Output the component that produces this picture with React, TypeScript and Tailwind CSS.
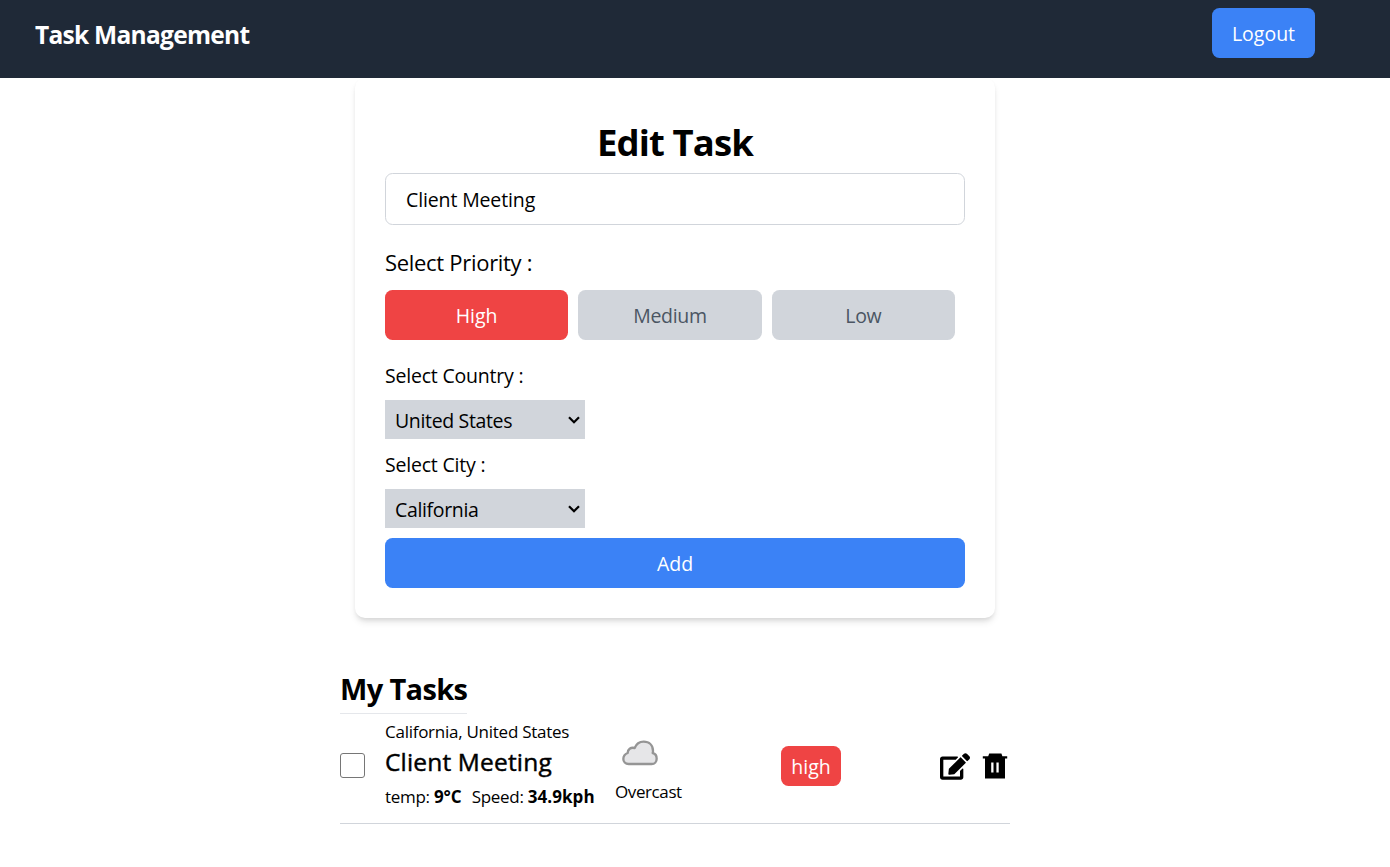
import { useState } from "react";
import { FaEdit } from "react-icons/fa";

const priorities = ["High", "Medium", "Low"];

function Chevron() {
  return (
    <svg className="h-[8px] w-[12px]" viewBox="0 0 12 8" fill="none" stroke="#000" strokeWidth="2.2">
      <path d="M1 1.2 6 6.2 11 1.2" />
    </svg>
  );
}

function CloudIcon() {
  return (
    <svg className="h-[26px] w-[36px]" viewBox="66 45 108 78" fill="#e6e6e8" stroke="#959595" strokeWidth="7" strokeLinejoin="round">
      <path d="M86 117C76 117 70 110 70 102C70 93 75 87 83 84C83 73 92 66 104 69C109 56 119 50 131 50C148 50 159 61 159 78C159 80 159 82 158 84C166 86 170 93 170 101C170 110 164 117 155 117Z" />
    </svg>
  );
}

function TrashIcon() {
  return (
    <svg className="mt-[1px] h-[26px] w-[26px]" viewBox="0 0 26 26" fill="#000">
      <path
        fillRule="evenodd"
        d="M7.200 .6h12.200l1 2.600h4.800v2.300h-2.200v20H3V5.500H.8V3.200h5.400zM9.200 9.400v10.200h2.300V9.400zM14.400 9.400v10.200h2.300V9.400z"
      />
    </svg>
  );
}

function Picker({ label, value }: { label: string; value: string }) {
  return (
    <div className="flex flex-col">
      <span className="h-[30px] text-[19.5px] leading-[30px] tracking-[-0.2px]">{label}</span>
      <button className="mt-[9px] flex h-[39px] w-[200px] items-center justify-between bg-[#d1d5db] pr-[5px] pl-[10px] text-[19.5px] tracking-[-0.35px]">
        <span className="pt-[3px]">{value}</span>
        <Chevron />
      </button>
    </div>
  );
}

export default function App() {
  const [selected, setSelected] = useState("High");
  return (
    <div className="h-[867px] overflow-hidden bg-white font-['Open_Sans',sans-serif] text-black">
      <nav className="flex h-[78px] items-start justify-between bg-[#1f2937] pt-[8px] pr-[75px] pl-[35px] text-white">
        <h1 className="text-[24.5px] leading-[54px] font-bold tracking-[-0.72px]">Task Management</h1>
        <button className="h-[50px] w-[103px] rounded-[7.5px] bg-[#3b82f6] pt-[2px] text-[19.5px]">Logout</button>
      </nav>

      <main className="flex flex-col pl-[340px]">
        <section className="ml-[15px] flex h-[540px] w-[640px] flex-col rounded-[10px] px-[30px] pt-[42px] shadow-[0_5px_7.5px_-1px_rgba(0,0,0,0.1),0_2.5px_5px_-2px_rgba(0,0,0,0.1)]">
          <h2 className="h-[53px] text-center text-[36.5px] leading-[45px] font-bold tracking-[-0.9px]">Edit Task</h2>
          <input
            className="h-[52px] w-full rounded-[7.5px] border border-[#d1d5db] px-[20px] text-[19.5px] tracking-[-0.13px]"
            defaultValue="Client Meeting"
          />
          <p className="mt-[20px] h-[35px] text-[22px] leading-[35px] tracking-[-0.3px]">Select Priority :</p>
          <div className="mt-[10px] flex gap-[10px] pr-[10px]">
            {priorities.map((p) => (
              <button
                key={p}
                onClick={() => setSelected(p)}
                className={
                  selected === p
                    ? "h-[50px] flex-1 rounded-[7.5px] bg-[#ef4444] pt-[2px] text-[19.5px] text-white"
                    : "h-[50px] flex-1 rounded-[7.5px] bg-[#d1d5db] pt-[2px] text-[19.5px] tracking-[-0.3px] text-[#4b5563]"
                }
              >
                {p}
              </button>
            ))}
          </div>
          <div className="mt-[21px] flex flex-col gap-[11px]">
            <Picker label="Select Country :" value="United States" />
            <Picker label="Select City :" value="California" />
          </div>
          <button className="mt-[10px] h-[50px] rounded-[7.5px] bg-[#3b82f6] pt-[2px] text-[19.5px] text-white">Add</button>
        </section>

        <section className="mt-[50px] w-[670px]">
          <h2 className="h-[46px] w-[127px] border-b border-[#e5e7eb] text-[29px] leading-[42px] font-bold tracking-[-0.65px] whitespace-nowrap">My Tasks</h2>
          <div className="flex h-[110px] items-start border-b border-[#d1d5db]">
            <input type="checkbox" className="mt-[39px] size-[25px] shrink-0 appearance-none rounded-[3px] border border-[#767676]" />
            <div className="ml-[20px] w-[230px] pt-[3px] whitespace-nowrap">
              <p className="text-[17px] leading-[30px] tracking-[-0.26px]">California, United States</p>
              <p className="text-[24.5px] leading-[29px] tracking-[0.17px] [-webkit-text-stroke:0.45px_black]">Client Meeting</p>
              <p className="flex gap-[10px] text-[17px] leading-[41px] tracking-[-0.28px]">
                <span>
                  temp: <b className="tracking-[-0.05px]">9°C</b>
                </span>
                <span>
                  Speed: <b className="tracking-[0.05px]">34.9kph</b>
                </span>
              </p>
            </div>
            <div className="flex flex-col pt-[26px]">
              <span className="pl-[7px]">
                <CloudIcon />
              </span>
              <span className="mt-[11px] text-[17px] leading-[30px] tracking-[-0.4px]">Overcast</span>
            </div>
            <span className="mt-[32px] ml-auto h-[40px] w-[60px] rounded-[7.5px] bg-[#ef4444] pt-[1px] text-center text-[19.5px] leading-[40px] text-white">
              high
            </span>
            <div className="mt-[38px] ml-[99px] flex gap-[12px] pr-[2px]">
              <FaEdit className="mt-[1px] h-[27px] w-[30px]" />
              <TrashIcon />
            </div>
          </div>
        </section>
      </main>
    </div>
  );
}
